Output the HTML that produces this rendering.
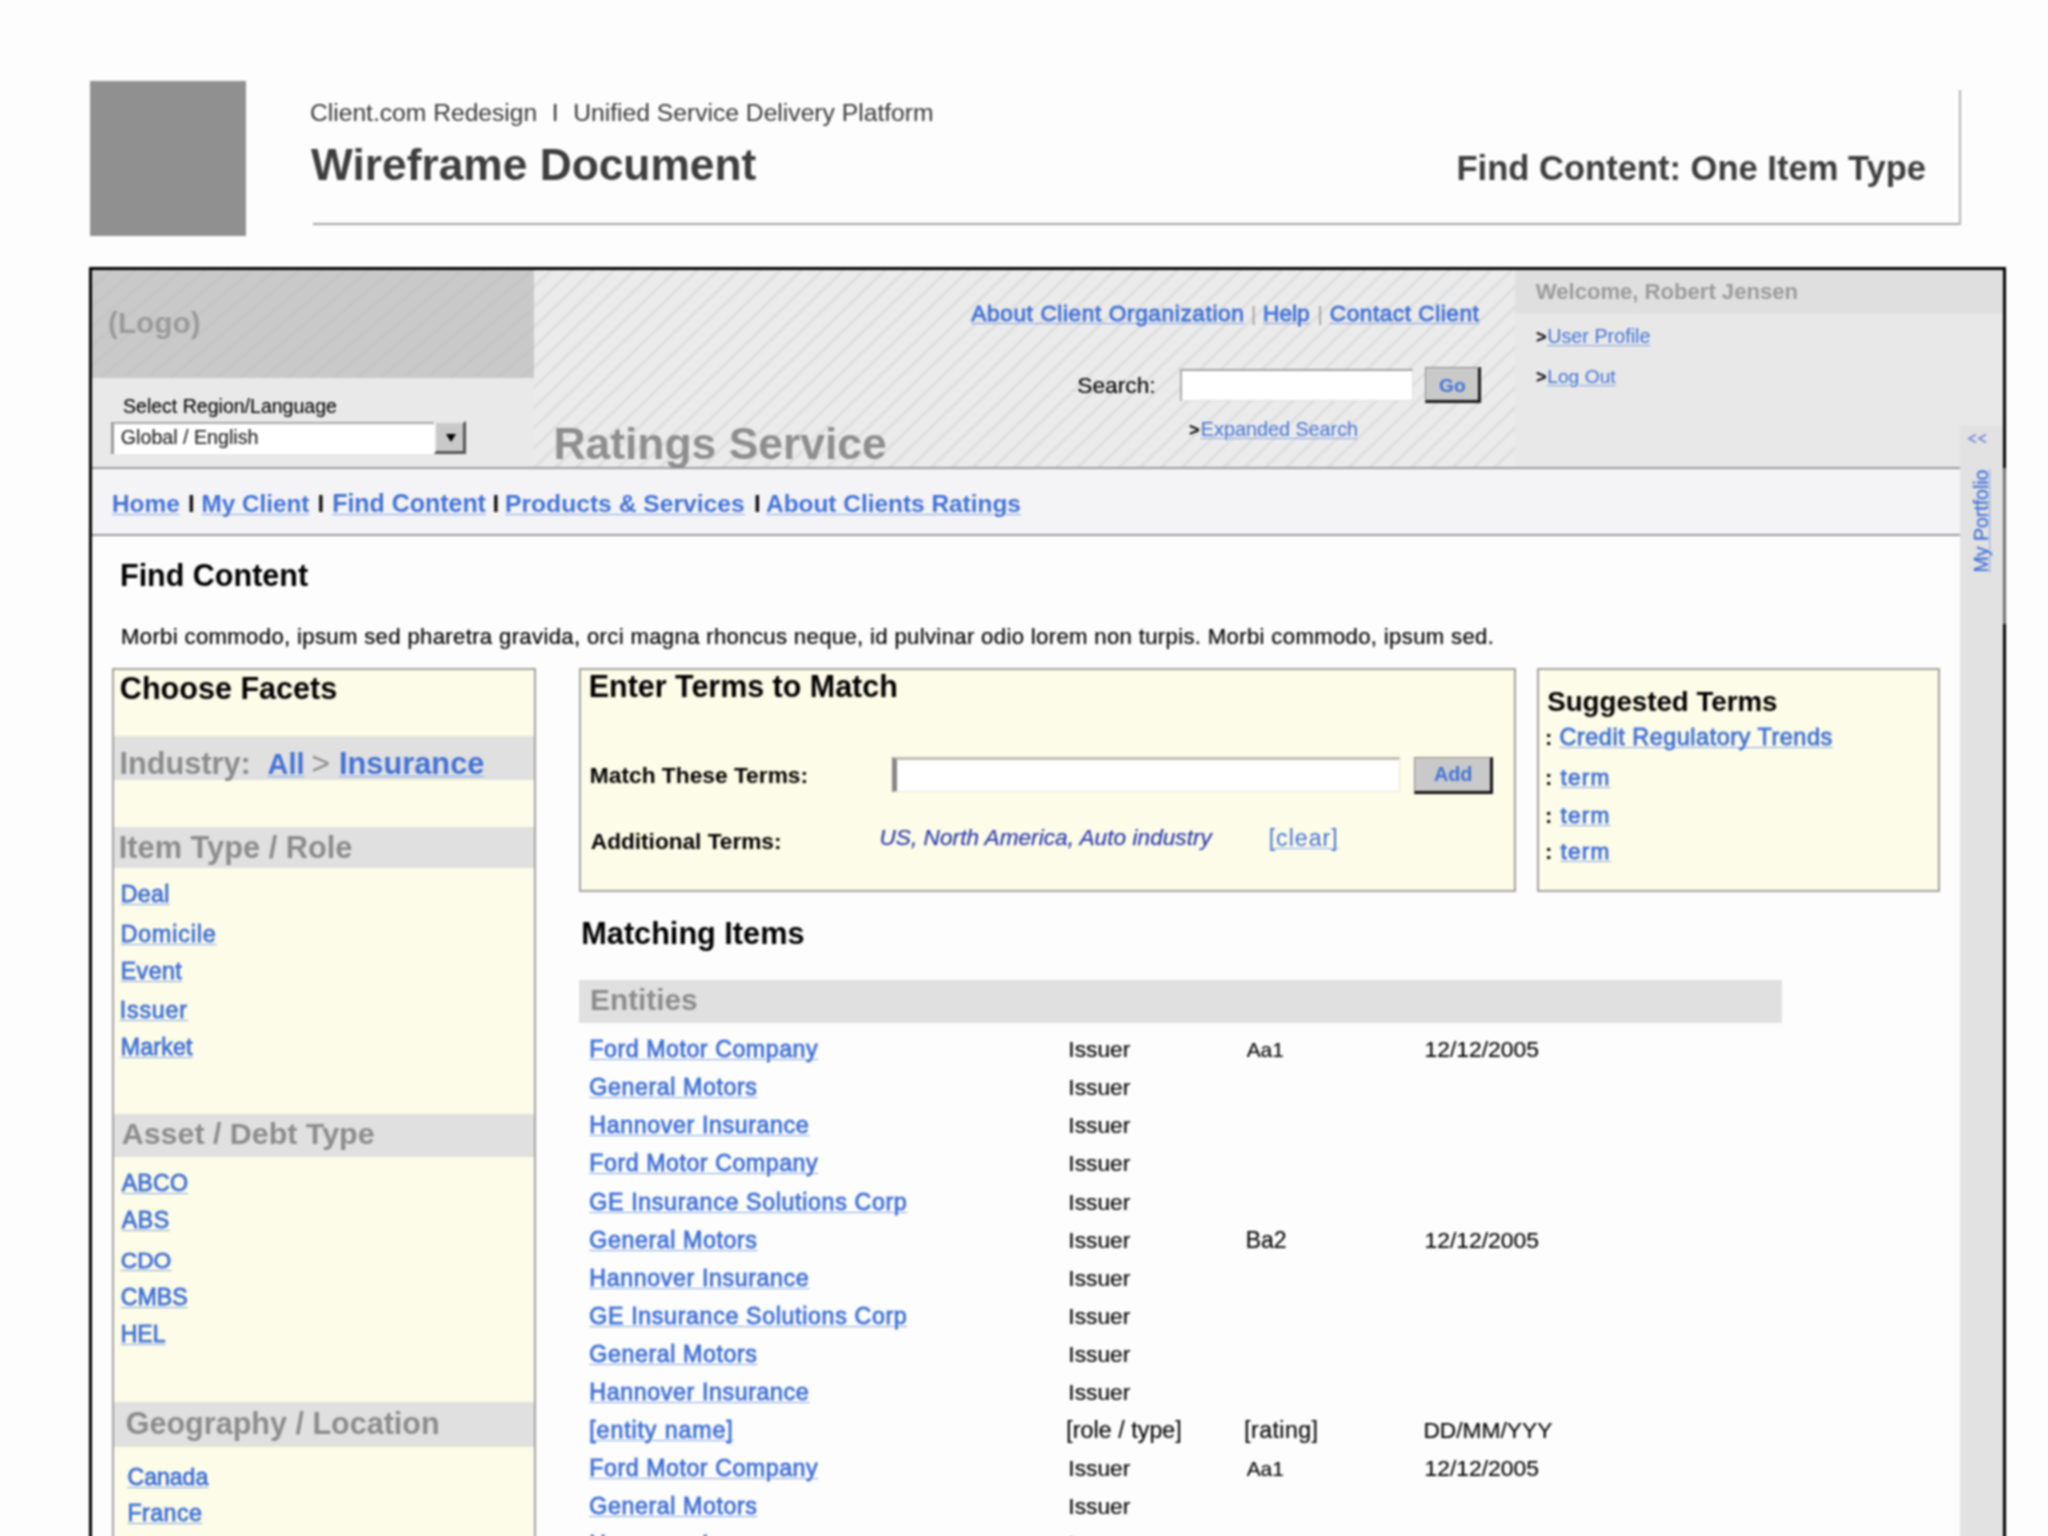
<!DOCTYPE html><html><head><meta charset="utf-8"><style>
html,body{margin:0;padding:0;background:#fdfdfd;}body{width:2048px;height:1536px;overflow:hidden;position:relative;font-family:"Liberation Sans",sans-serif;}
.r{position:absolute;}.t{position:absolute;line-height:1;white-space:nowrap;}
#w{position:absolute;left:0;top:0;width:2048px;height:1600px;overflow:hidden;filter:blur(0.8px);}
</style></head><body><div id="w">
<div class="r" style="left:90px;top:81px;width:156.0px;height:155.0px;background:#909090"></div>
<div class="r" style="left:313px;top:222.5px;width:1648.0px;height:2.0px;background:#a4a4a4"></div>
<div class="r" style="left:1959px;top:90px;width:2.0px;height:134.5px;background:#b4b4b4"></div>
<div class="r" style="left:89px;top:267px;width:1917.0px;height:1333.0px;border:3px solid #000;box-sizing:border-box;background:#fdfdfd"></div>
<div class="r" style="left:92px;top:270px;width:442.0px;height:107.5px;background-color:#c9c9c9;background-image:repeating-linear-gradient(140deg, rgba(0,0,0,0) 0px, rgba(0,0,0,0) 11px, rgba(0,0,0,0.025) 12.5px, rgba(0,0,0,0.025) 13.5px, rgba(0,0,0,0) 15px)"></div>
<div class="r" style="left:92px;top:377.5px;width:443.0px;height:89.5px;background:#e9e9e9"></div>
<div class="r" style="left:534px;top:270px;width:981.0px;height:197.0px;background-color:#ebebeb;background-image:repeating-linear-gradient(136deg, rgba(0,0,0,0) 0px, rgba(0,0,0,0) 10px, #dddddd 11.5px, #dcdcdc 12.5px, rgba(0,0,0,0) 14px, rgba(0,0,0,0) 14.5px)"></div>
<div class="r" style="left:1515px;top:270px;width:488.0px;height:43.0px;background:#dfdfdf"></div>
<div class="r" style="left:1515px;top:313px;width:488.0px;height:154.0px;background:#e8e8e8"></div>
<div class="r" style="left:92px;top:466.5px;width:1868.0px;height:2.0px;background:#9a9a9a"></div>
<div class="r" style="left:92px;top:468.5px;width:1868.0px;height:65.0px;background:#f4f4f6"></div>
<div class="r" style="left:92px;top:533.5px;width:1868.0px;height:2.0px;background:#9a9a9a"></div>
<div class="r" style="left:111px;top:422px;width:323.0px;height:32.0px;background:#fff;border-top:2px solid #a8a8a8;border-left:3px solid #9a9a9a;box-sizing:border-box"></div>
<div class="r" style="left:434px;top:421px;width:32.0px;height:33.0px;background:#c9c9c9;border-top:2px solid #e6e6e6;border-left:2px solid #f4f4f4;border-right:3px solid #555;border-bottom:3px solid #555;box-sizing:border-box"></div>
<div class="r" style="left:1180px;top:369px;width:233.0px;height:32.0px;background:#fff;border-top:2px solid #a0a0a0;border-left:2px solid #a8a8a8;border-bottom:1px solid #dcdcdc;border-right:1px solid #dcdcdc;box-sizing:border-box"></div>
<div class="r" style="left:1425px;top:367px;width:56.0px;height:35.5px;background:#c9c9c9;border-top:1px solid #8a8a8a;border-left:1px solid #8a8a8a;border-right:3px solid #1a1a1a;border-bottom:3px solid #1a1a1a;box-sizing:border-box"></div>
<div class="r" style="left:111.5px;top:668px;width:424.0px;height:932.0px;background:#fdfce8;border:2px solid #a2a2a2;box-sizing:border-box"></div>
<div class="r" style="left:113.5px;top:736px;width:420.0px;height:44.0px;background:#e0e0e0"></div>
<div class="r" style="left:113.5px;top:826.5px;width:420.0px;height:41.0px;background:#e0e0e0"></div>
<div class="r" style="left:113.5px;top:1114px;width:420.0px;height:42.7px;background:#e0e0e0"></div>
<div class="r" style="left:113.5px;top:1402.3px;width:420.0px;height:44.5px;background:#e0e0e0"></div>
<div class="r" style="left:579px;top:668px;width:936.5px;height:224.0px;background:#fdfce8;border:2px solid #a2a2a2;box-sizing:border-box"></div>
<div class="r" style="left:891.5px;top:757px;width:508.5px;height:34.5px;background:#fff;border-top:3px solid #bdbdb4;border-left:5px solid #858585;border-bottom:1px solid #e8e8e0;border-right:1px solid #e8e8e0;box-sizing:border-box"></div>
<div class="r" style="left:1414.4px;top:756.7px;width:78.8px;height:37.1px;background:#c9c9c9;border-top:1px solid #8a8a8a;border-left:1px solid #8a8a8a;border-right:3px solid #111;border-bottom:3px solid #111;box-sizing:border-box"></div>
<div class="r" style="left:1537px;top:668px;width:402.5px;height:224.0px;background:#fdfce8;border:2px solid #a2a2a2;box-sizing:border-box"></div>
<div class="r" style="left:579.4px;top:979.7px;width:1202.6px;height:43.0px;background:#e0e0e0"></div>
<div class="r" style="left:1960px;top:425px;width:43.0px;height:1175.0px;background:#e2e2e2"></div>
<div class="r" style="left:2003px;top:468px;width:3.0px;height:156.0px;background:#707070"></div>
<div class="t" style="left:310.0px;top:100.6px;font-size:24.63px;color:#383838;">Client.com Redesign</div>
<div class="t" style="left:551.7px;top:100.6px;font-size:24.5px;color:#383838;">I</div>
<div class="t" style="left:573.2px;top:100.6px;font-size:24.67px;color:#383838;">Unified Service Delivery Platform</div>
<div class="t" style="left:311.0px;top:143.0px;font-size:44.32px;color:#3e3e3e;font-weight:bold;">Wireframe Document</div>
<div class="t" style="left:1456.5px;top:151.2px;font-size:34.55px;color:#3e3e3e;font-weight:bold;">Find Content: One Item Type</div>
<div class="t" style="left:108.0px;top:308.0px;font-size:29.81px;color:#9a9a9a;font-weight:bold;">(Logo)</div>
<div class="t" style="left:123.0px;top:396.5px;font-size:19.55px;color:#000000;-webkit-text-stroke:0.1px #000000;">Select Region/Language</div>
<div class="t" style="left:120.8px;top:428.0px;font-size:19.67px;color:#222;-webkit-text-stroke:0.15px #222;">Global / English</div>
<div class="t" style="left:553.4px;top:422.0px;font-size:44.43px;color:#8e8e8e;font-weight:bold;">Ratings Service</div>
<div class="t" style="left:971.3px;top:301.5px;font-size:22.66px;color:#4272d6;letter-spacing:0.598px;-webkit-text-stroke:0.85px #4272d6;text-decoration:underline;text-decoration-color:#86a6e4;text-decoration-thickness:1px;text-underline-offset:1.5px;">About Client Organization</div>
<div class="t" style="left:1251.0px;top:303.5px;font-size:20px;color:#9a9a9a;">|</div>
<div class="t" style="left:1263.1px;top:301.5px;font-size:22.66px;color:#4272d6;-webkit-text-stroke:0.85px #4272d6;text-decoration:underline;text-decoration-color:#86a6e4;text-decoration-thickness:1px;text-underline-offset:1.5px;">Help</div>
<div class="t" style="left:1317.5px;top:303.5px;font-size:20px;color:#9a9a9a;">|</div>
<div class="t" style="left:1329.8px;top:301.5px;font-size:22.66px;color:#4272d6;letter-spacing:0.517px;-webkit-text-stroke:0.85px #4272d6;text-decoration:underline;text-decoration-color:#86a6e4;text-decoration-thickness:1px;text-underline-offset:1.5px;">Contact Client</div>
<div class="t" style="left:1077.3px;top:373.6px;font-size:22.74px;color:#000000;-webkit-text-stroke:0.15px #000000;">Search:</div>
<div class="t" style="left:1439.0px;top:375.5px;font-size:19.16px;color:#4272d6;font-weight:bold;">Go</div>
<div class="t" style="left:1189.0px;top:420.6px;font-size:18px;color:#000000;font-weight:bold;">&gt;</div>
<div class="t" style="left:1200.8px;top:419.6px;font-size:19.79px;color:#4272d6;text-decoration:underline;text-decoration-color:#86a6e4;text-decoration-thickness:1px;text-underline-offset:1.5px;">Expanded Search</div>
<div class="t" style="left:1535.8px;top:281.0px;font-size:22.09px;color:#9a9a9a;font-weight:bold;">Welcome, Robert Jensen</div>
<div class="t" style="left:1536.0px;top:327.5px;font-size:18px;color:#000000;font-weight:bold;">&gt;</div>
<div class="t" style="left:1547.2px;top:326.5px;font-size:19.78px;color:#4272d6;text-decoration:underline;text-decoration-color:#86a6e4;text-decoration-thickness:1px;text-underline-offset:1.5px;">User Profile</div>
<div class="t" style="left:1536.0px;top:367.5px;font-size:18px;color:#000000;font-weight:bold;">&gt;</div>
<div class="t" style="left:1547.2px;top:366.5px;font-size:19.25px;color:#4272d6;text-decoration:underline;text-decoration-color:#86a6e4;text-decoration-thickness:1px;text-underline-offset:1.5px;">Log Out</div>
<div class="t" style="left:112.0px;top:491.9px;font-size:24.39px;color:#4272d6;font-weight:bold;text-decoration:underline;text-decoration-color:#86a6e4;text-decoration-thickness:1px;text-underline-offset:1.5px;">Home</div>
<div class="t" style="left:188.0px;top:491.9px;font-size:24px;color:#111;font-weight:bold;">I</div>
<div class="t" style="left:201.5px;top:491.9px;font-size:24.28px;color:#4272d6;font-weight:bold;text-decoration:underline;text-decoration-color:#86a6e4;text-decoration-thickness:1px;text-underline-offset:1.5px;">My Client</div>
<div class="t" style="left:317.5px;top:491.9px;font-size:24px;color:#111;font-weight:bold;">I</div>
<div class="t" style="left:332.2px;top:490.9px;font-size:24.95px;color:#4272d6;font-weight:bold;text-decoration:underline;text-decoration-color:#86a6e4;text-decoration-thickness:1px;text-underline-offset:1.5px;">Find Content</div>
<div class="t" style="left:492.5px;top:491.9px;font-size:24px;color:#111;font-weight:bold;">I</div>
<div class="t" style="left:505.0px;top:491.9px;font-size:24.65px;color:#4272d6;font-weight:bold;text-decoration:underline;text-decoration-color:#86a6e4;text-decoration-thickness:1px;text-underline-offset:1.5px;">Products &amp; Services</div>
<div class="t" style="left:754.0px;top:491.9px;font-size:24px;color:#111;font-weight:bold;">I</div>
<div class="t" style="left:766.0px;top:491.9px;font-size:24.42px;color:#4272d6;font-weight:bold;text-decoration:underline;text-decoration-color:#86a6e4;text-decoration-thickness:1px;text-underline-offset:1.5px;">About Clients Ratings</div>
<div class="t" style="left:120.0px;top:559.6px;font-size:30.5px;color:#000000;font-weight:bold;">Find Content</div>
<div class="t" style="left:121.0px;top:626.4px;font-size:22.14px;color:#000000;letter-spacing:0.34px;-webkit-text-stroke:0.2px #000000;">Morbi commodo, ipsum sed pharetra gravida, orci magna rhoncus neque, id pulvinar odio lorem non turpis. Morbi commodo, ipsum sed.</div>
<div class="t" style="left:119.8px;top:673.0px;font-size:30.59px;color:#000000;font-weight:bold;">Choose Facets</div>
<div class="t" style="left:119.5px;top:747.8px;font-size:30.66px;color:#8c8c8c;font-weight:bold;">Industry:</div>
<div class="t" style="left:267.5px;top:749.8px;font-size:28.95px;color:#4272d6;font-weight:bold;text-decoration:underline;text-decoration-color:#86a6e4;text-decoration-thickness:1px;text-underline-offset:1.5px;">All</div>
<div class="t" style="left:311.6px;top:747.8px;font-size:31.5px;color:#8c8c8c;">&gt;</div>
<div class="t" style="left:339.0px;top:748.8px;font-size:30.79px;color:#4272d6;font-weight:bold;text-decoration:underline;text-decoration-color:#86a6e4;text-decoration-thickness:1px;text-underline-offset:1.5px;">Insurance</div>
<div class="t" style="left:118.8px;top:832.5px;font-size:30.77px;color:#8c8c8c;font-weight:bold;">Item Type / Role</div>
<div class="t" style="left:120.7px;top:882.7px;font-size:23.18px;color:#4272d6;letter-spacing:0.332px;-webkit-text-stroke:0.85px #4272d6;text-decoration:underline;text-decoration-color:#86a6e4;text-decoration-thickness:1px;text-underline-offset:1.5px;">Deal</div>
<div class="t" style="left:120.7px;top:922.7px;font-size:23.18px;color:#4272d6;letter-spacing:0.858px;-webkit-text-stroke:0.85px #4272d6;text-decoration:underline;text-decoration-color:#86a6e4;text-decoration-thickness:1px;text-underline-offset:1.5px;">Domicile</div>
<div class="t" style="left:120.7px;top:960.2px;font-size:23.18px;color:#4272d6;letter-spacing:0.449px;-webkit-text-stroke:0.85px #4272d6;text-decoration:underline;text-decoration-color:#86a6e4;text-decoration-thickness:1px;text-underline-offset:1.5px;">Event</div>
<div class="t" style="left:119.7px;top:998.5px;font-size:23.18px;color:#4272d6;letter-spacing:0.846px;-webkit-text-stroke:0.85px #4272d6;text-decoration:underline;text-decoration-color:#86a6e4;text-decoration-thickness:1px;text-underline-offset:1.5px;">Issuer</div>
<div class="t" style="left:120.7px;top:1036.0px;font-size:23.18px;color:#4272d6;letter-spacing:0.206px;-webkit-text-stroke:0.85px #4272d6;text-decoration:underline;text-decoration-color:#86a6e4;text-decoration-thickness:1px;text-underline-offset:1.5px;">Market</div>
<div class="t" style="left:121.7px;top:1118.0px;font-size:30.42px;color:#8c8c8c;font-weight:bold;">Asset / Debt Type</div>
<div class="t" style="left:121.7px;top:1171.8px;font-size:23.18px;color:#4272d6;letter-spacing:0.213px;-webkit-text-stroke:0.85px #4272d6;text-decoration:underline;text-decoration-color:#86a6e4;text-decoration-thickness:1px;text-underline-offset:1.5px;">ABCO</div>
<div class="t" style="left:121.7px;top:1209.3px;font-size:23.18px;color:#4272d6;letter-spacing:0.632px;-webkit-text-stroke:0.85px #4272d6;text-decoration:underline;text-decoration-color:#86a6e4;text-decoration-thickness:1px;text-underline-offset:1.5px;">ABS</div>
<div class="t" style="left:120.7px;top:1248.5px;font-size:22.78px;color:#4272d6;-webkit-text-stroke:0.85px #4272d6;text-decoration:underline;text-decoration-color:#86a6e4;text-decoration-thickness:1px;text-underline-offset:1.5px;">CDO</div>
<div class="t" style="left:120.7px;top:1286.0px;font-size:23.18px;color:#4272d6;-webkit-text-stroke:0.85px #4272d6;text-decoration:underline;text-decoration-color:#86a6e4;text-decoration-thickness:1px;text-underline-offset:1.5px;">CMBS</div>
<div class="t" style="left:120.7px;top:1322.7px;font-size:23.06px;color:#4272d6;-webkit-text-stroke:0.85px #4272d6;text-decoration:underline;text-decoration-color:#86a6e4;text-decoration-thickness:1px;text-underline-offset:1.5px;">HEL</div>
<div class="t" style="left:125.7px;top:1407.5px;font-size:30.56px;color:#8c8c8c;font-weight:bold;">Geography / Location</div>
<div class="t" style="left:127.5px;top:1465.7px;font-size:23.05px;color:#4272d6;-webkit-text-stroke:0.85px #4272d6;text-decoration:underline;text-decoration-color:#86a6e4;text-decoration-thickness:1px;text-underline-offset:1.5px;">Canada</div>
<div class="t" style="left:127.5px;top:1502.4px;font-size:23.18px;color:#4272d6;letter-spacing:0.446px;-webkit-text-stroke:0.85px #4272d6;text-decoration:underline;text-decoration-color:#86a6e4;text-decoration-thickness:1px;text-underline-offset:1.5px;">France</div>
<div class="t" style="left:588.8px;top:670.5px;font-size:30.44px;color:#000000;font-weight:bold;">Enter Terms to Match</div>
<div class="t" style="left:589.8px;top:764.3px;font-size:22.76px;color:#000000;font-weight:bold;">Match These Terms:</div>
<div class="t" style="left:590.8px;top:831.4px;font-size:22.63px;color:#000000;font-weight:bold;">Additional Terms:</div>
<div class="t" style="left:1433.9px;top:764.8px;font-size:19.87px;color:#4272d6;font-weight:bold;">Add</div>
<div class="t" style="left:879.5px;top:826.7px;font-size:22.57px;color:#2e3cac;font-style:italic;letter-spacing:0.057px;-webkit-text-stroke:0.25px #2e3cac;">US, North America, Auto industry</div>
<div class="t" style="left:1268.7px;top:826.7px;font-size:23.1px;color:#4272d6;letter-spacing:1.019px;text-decoration:underline;text-decoration-color:#86a6e4;text-decoration-thickness:1px;text-underline-offset:1.5px;">[clear]</div>
<div class="t" style="left:1547.2px;top:687.8px;font-size:27.69px;color:#000000;font-weight:bold;">Suggested Terms</div>
<div class="t" style="left:1545.0px;top:727.2px;font-size:22px;color:#000000;font-weight:bold;">:</div>
<div class="t" style="left:1559.5px;top:726.2px;font-size:23.43px;color:#4272d6;letter-spacing:0.535px;-webkit-text-stroke:0.85px #4272d6;text-decoration:underline;text-decoration-color:#86a6e4;text-decoration-thickness:1px;text-underline-offset:1.5px;">Credit Regulatory Trends</div>
<div class="t" style="left:1545.0px;top:767.0px;font-size:22px;color:#000000;font-weight:bold;">:</div>
<div class="t" style="left:1560.5px;top:766.0px;font-size:22.66px;color:#4272d6;letter-spacing:1.182px;-webkit-text-stroke:0.85px #4272d6;text-decoration:underline;text-decoration-color:#86a6e4;text-decoration-thickness:1px;text-underline-offset:1.5px;">term</div>
<div class="t" style="left:1545.0px;top:804.5px;font-size:22px;color:#000000;font-weight:bold;">:</div>
<div class="t" style="left:1560.5px;top:803.5px;font-size:22.66px;color:#4272d6;letter-spacing:1.182px;-webkit-text-stroke:0.85px #4272d6;text-decoration:underline;text-decoration-color:#86a6e4;text-decoration-thickness:1px;text-underline-offset:1.5px;">term</div>
<div class="t" style="left:1545.0px;top:841.2px;font-size:22px;color:#000000;font-weight:bold;">:</div>
<div class="t" style="left:1560.5px;top:840.2px;font-size:22.66px;color:#4272d6;letter-spacing:1.182px;-webkit-text-stroke:0.85px #4272d6;text-decoration:underline;text-decoration-color:#86a6e4;text-decoration-thickness:1px;text-underline-offset:1.5px;">term</div>
<div class="t" style="left:581.3px;top:917.8px;font-size:30.67px;color:#000000;font-weight:bold;">Matching Items</div>
<div class="t" style="left:590.1px;top:985.2px;font-size:29.77px;color:#8c8c8c;font-weight:bold;">Entities</div>
<div class="t" style="left:589.3px;top:1038.1px;font-size:23.18px;color:#4272d6;letter-spacing:0.553px;-webkit-text-stroke:0.85px #4272d6;text-decoration:underline;text-decoration-color:#86a6e4;text-decoration-thickness:1px;text-underline-offset:1.5px;">Ford Motor Company</div>
<div class="t" style="left:1068.3px;top:1038.1px;font-size:22.81px;color:#000000;-webkit-text-stroke:0.15px #000000;">Issuer</div>
<div class="t" style="left:1246.7px;top:1040.1px;font-size:20.9px;color:#000000;-webkit-text-stroke:0.15px #000000;">Aa1</div>
<div class="t" style="left:1424.6px;top:1038.1px;font-size:22.83px;color:#000000;-webkit-text-stroke:0.15px #000000;">12/12/2005</div>
<div class="t" style="left:589.3px;top:1076.2px;font-size:23.18px;color:#4272d6;letter-spacing:0.613px;-webkit-text-stroke:0.85px #4272d6;text-decoration:underline;text-decoration-color:#86a6e4;text-decoration-thickness:1px;text-underline-offset:1.5px;">General Motors</div>
<div class="t" style="left:1068.3px;top:1076.2px;font-size:22.81px;color:#000000;-webkit-text-stroke:0.15px #000000;">Issuer</div>
<div class="t" style="left:589.3px;top:1114.3px;font-size:23.18px;color:#4272d6;letter-spacing:0.633px;-webkit-text-stroke:0.85px #4272d6;text-decoration:underline;text-decoration-color:#86a6e4;text-decoration-thickness:1px;text-underline-offset:1.5px;">Hannover Insurance</div>
<div class="t" style="left:1068.3px;top:1114.3px;font-size:22.81px;color:#000000;-webkit-text-stroke:0.15px #000000;">Issuer</div>
<div class="t" style="left:589.3px;top:1152.4px;font-size:23.18px;color:#4272d6;letter-spacing:0.553px;-webkit-text-stroke:0.85px #4272d6;text-decoration:underline;text-decoration-color:#86a6e4;text-decoration-thickness:1px;text-underline-offset:1.5px;">Ford Motor Company</div>
<div class="t" style="left:1068.3px;top:1152.4px;font-size:22.81px;color:#000000;-webkit-text-stroke:0.15px #000000;">Issuer</div>
<div class="t" style="left:589.3px;top:1190.5px;font-size:23.18px;color:#4272d6;letter-spacing:0.666px;-webkit-text-stroke:0.85px #4272d6;text-decoration:underline;text-decoration-color:#86a6e4;text-decoration-thickness:1px;text-underline-offset:1.5px;">GE Insurance Solutions Corp</div>
<div class="t" style="left:1068.3px;top:1190.5px;font-size:22.81px;color:#000000;-webkit-text-stroke:0.15px #000000;">Issuer</div>
<div class="t" style="left:589.3px;top:1228.5px;font-size:23.18px;color:#4272d6;letter-spacing:0.613px;-webkit-text-stroke:0.85px #4272d6;text-decoration:underline;text-decoration-color:#86a6e4;text-decoration-thickness:1px;text-underline-offset:1.5px;">General Motors</div>
<div class="t" style="left:1068.3px;top:1228.5px;font-size:22.81px;color:#000000;-webkit-text-stroke:0.15px #000000;">Issuer</div>
<div class="t" style="left:1245.7px;top:1228.5px;font-size:23.04px;color:#000000;-webkit-text-stroke:0.15px #000000;">Ba2</div>
<div class="t" style="left:1424.6px;top:1228.5px;font-size:22.83px;color:#000000;-webkit-text-stroke:0.15px #000000;">12/12/2005</div>
<div class="t" style="left:589.3px;top:1266.6px;font-size:23.18px;color:#4272d6;letter-spacing:0.633px;-webkit-text-stroke:0.85px #4272d6;text-decoration:underline;text-decoration-color:#86a6e4;text-decoration-thickness:1px;text-underline-offset:1.5px;">Hannover Insurance</div>
<div class="t" style="left:1068.3px;top:1266.6px;font-size:22.81px;color:#000000;-webkit-text-stroke:0.15px #000000;">Issuer</div>
<div class="t" style="left:589.3px;top:1304.7px;font-size:23.18px;color:#4272d6;letter-spacing:0.666px;-webkit-text-stroke:0.85px #4272d6;text-decoration:underline;text-decoration-color:#86a6e4;text-decoration-thickness:1px;text-underline-offset:1.5px;">GE Insurance Solutions Corp</div>
<div class="t" style="left:1068.3px;top:1304.7px;font-size:22.81px;color:#000000;-webkit-text-stroke:0.15px #000000;">Issuer</div>
<div class="t" style="left:589.3px;top:1342.8px;font-size:23.18px;color:#4272d6;letter-spacing:0.613px;-webkit-text-stroke:0.85px #4272d6;text-decoration:underline;text-decoration-color:#86a6e4;text-decoration-thickness:1px;text-underline-offset:1.5px;">General Motors</div>
<div class="t" style="left:1068.3px;top:1342.8px;font-size:22.81px;color:#000000;-webkit-text-stroke:0.15px #000000;">Issuer</div>
<div class="t" style="left:589.3px;top:1380.9px;font-size:23.18px;color:#4272d6;letter-spacing:0.633px;-webkit-text-stroke:0.85px #4272d6;text-decoration:underline;text-decoration-color:#86a6e4;text-decoration-thickness:1px;text-underline-offset:1.5px;">Hannover Insurance</div>
<div class="t" style="left:1068.3px;top:1380.9px;font-size:22.81px;color:#000000;-webkit-text-stroke:0.15px #000000;">Issuer</div>
<div class="t" style="left:589.3px;top:1419.0px;font-size:23.18px;color:#4272d6;letter-spacing:0.887px;-webkit-text-stroke:0.85px #4272d6;text-decoration:underline;text-decoration-color:#86a6e4;text-decoration-thickness:1px;text-underline-offset:1.5px;">[entity name]</div>
<div class="t" style="left:1066.3px;top:1419.0px;font-size:23.1px;color:#000000;letter-spacing:0.096px;-webkit-text-stroke:0.15px #000000;">[role / type]</div>
<div class="t" style="left:1244.2px;top:1419.0px;font-size:23.1px;color:#000000;letter-spacing:0.443px;-webkit-text-stroke:0.15px #000000;">[rating]</div>
<div class="t" style="left:1423.4px;top:1419.0px;font-size:22.76px;color:#000000;-webkit-text-stroke:0.15px #000000;">DD/MM/YYY</div>
<div class="t" style="left:589.3px;top:1457.1px;font-size:23.18px;color:#4272d6;letter-spacing:0.553px;-webkit-text-stroke:0.85px #4272d6;text-decoration:underline;text-decoration-color:#86a6e4;text-decoration-thickness:1px;text-underline-offset:1.5px;">Ford Motor Company</div>
<div class="t" style="left:1068.3px;top:1457.1px;font-size:22.81px;color:#000000;-webkit-text-stroke:0.15px #000000;">Issuer</div>
<div class="t" style="left:1246.7px;top:1459.1px;font-size:20.9px;color:#000000;-webkit-text-stroke:0.15px #000000;">Aa1</div>
<div class="t" style="left:1424.6px;top:1457.1px;font-size:22.83px;color:#000000;-webkit-text-stroke:0.15px #000000;">12/12/2005</div>
<div class="t" style="left:589.3px;top:1495.2px;font-size:23.18px;color:#4272d6;letter-spacing:0.613px;-webkit-text-stroke:0.85px #4272d6;text-decoration:underline;text-decoration-color:#86a6e4;text-decoration-thickness:1px;text-underline-offset:1.5px;">General Motors</div>
<div class="t" style="left:1068.3px;top:1495.2px;font-size:22.81px;color:#000000;-webkit-text-stroke:0.15px #000000;">Issuer</div>
<div class="t" style="left:589.3px;top:1533.3px;font-size:23.18px;color:#4272d6;letter-spacing:0.633px;-webkit-text-stroke:0.85px #4272d6;text-decoration:underline;text-decoration-color:#86a6e4;text-decoration-thickness:1px;text-underline-offset:1.5px;">Hannover Insurance</div>
<div class="t" style="left:1068.3px;top:1533.3px;font-size:22.81px;color:#000000;-webkit-text-stroke:0.15px #000000;">Issuer</div>
<svg style="position:absolute;left:445px;top:433px" width="12" height="10" viewBox="0 0 12 10"><polygon points="1,1 11,1 6,9" fill="#000"/></svg>
<svg style="position:absolute;left:1967px;top:433px" width="22" height="11" viewBox="0 0 22 11"><polyline points="9,1.5 2,5.5 9,9.5" fill="none" stroke="#7a8ad8" stroke-width="1.8"/><polyline points="19,1.5 12,5.5 19,9.5" fill="none" stroke="#7a8ad8" stroke-width="1.8"/></svg>
<div class="t" style="left:1982px;top:521px;font-size:19.5px;color:#4272d6;text-decoration:underline;text-decoration-color:#86a6e4;text-decoration-thickness:1px;-webkit-text-stroke:0.3px #4272d6;transform:translate(-50%,-50%) rotate(-90deg);">My Portfolio</div>
</div></body></html>
